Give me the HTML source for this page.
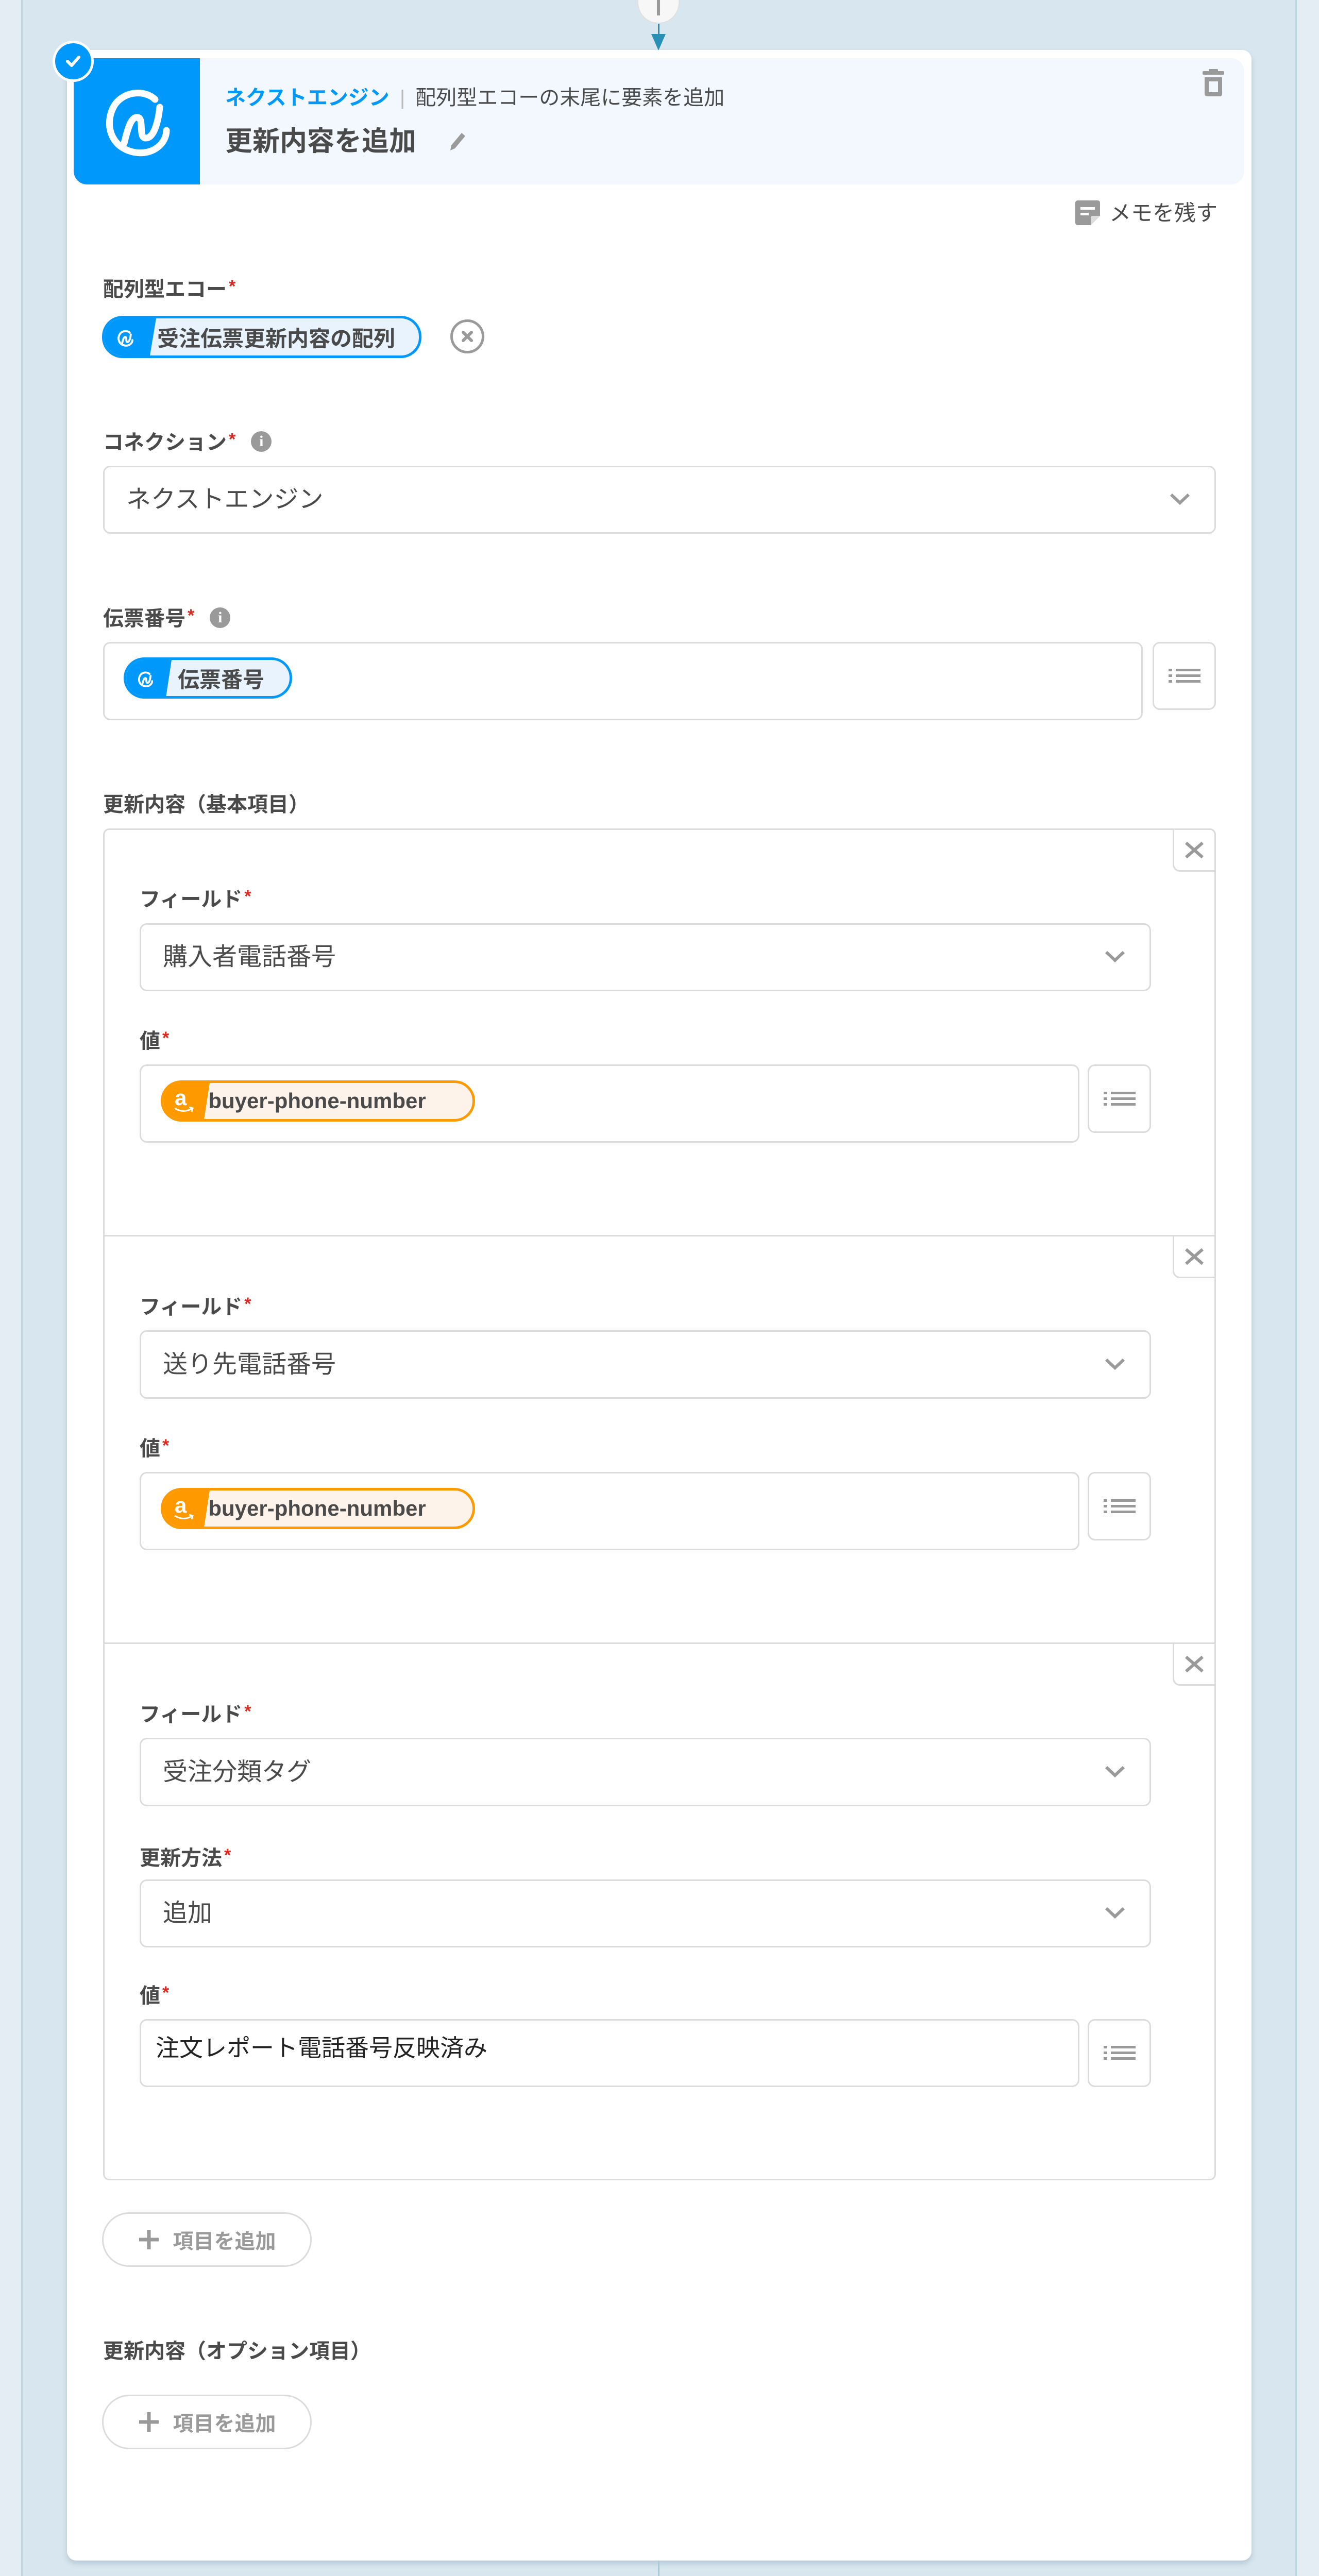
<!DOCTYPE html>
<html><head><meta charset="utf-8">
<style>
*{box-sizing:border-box;margin:0;padding:0}
html,body{width:2560px;height:5065px;overflow:hidden}
body{background:#d8e6ef;font-family:"Liberation Sans","Noto Sans CJK JP",sans-serif;color:#4a4a4a}
#w{position:relative;width:2560px;height:5065px;overflow:hidden;background:#d8e6ef}
.a{position:absolute}
.lbl{position:absolute;font-size:40px;font-weight:bold;line-height:56px;height:56px;color:#4a4a4a;white-space:nowrap}
.req{color:#e0281e;font-size:34px;position:relative;top:-8px;margin-left:4px}
.info{display:inline-block;width:40px;height:40px;border-radius:50%;background:#9a9a9a;color:#fff;font-size:30px;line-height:40px;text-align:center;vertical-align:middle;margin-left:30px;position:relative;top:-4px;font-family:"Liberation Serif",serif;font-weight:bold}
.box{position:absolute;border:3px solid #dcdcdc;border-radius:14px;background:#fff}
.sel{font-size:48px;line-height:1;color:#4a4a4a;padding-left:42px;display:flex;align-items:center}
.chev{position:absolute;right:46px;top:50%;margin-top:-14px}
.lb{display:flex;align-items:center;justify-content:center}
.pill{position:absolute;border-radius:40px;overflow:hidden;display:flex;align-items:center;font-weight:bold;font-size:42px;color:#4a4a4a}
.pill .ic{position:absolute;left:0;top:0;bottom:0}
.pill span{position:relative}
.btn{position:absolute;border:3px solid #dcdcdc;border-radius:54px;background:#fff;color:#9a9a9a;font-weight:bold;font-size:40px;display:flex;align-items:center;justify-content:center}
</style></head><body><div id="w">
<div class="a" style="left:0;top:0;width:44px;height:5065px;background:#e4edf4;border-right:3px solid #bcd6e2"></div>
<div class="a" style="left:2514px;top:0;width:46px;height:5065px;background:#e4edf4;border-left:3px solid #bcd6e2"></div>
<div class="a" style="left:1237px;top:0;width:82px;height:46px;border-radius:0 0 41px 41px;background:#f7f7f7;border:2px solid #e0e0e0;border-top:none"></div>
<div class="a" style="left:1275px;top:0px;width:6px;height:30px;background:#999"></div>
<div class="a" style="left:1277px;top:46px;width:3px;height:30px;background:#2a8fb5"></div>
<div class="a" style="left:1264px;top:66px;width:0;height:0;border-left:14px solid transparent;border-right:14px solid transparent;border-top:32px solid #2a8fb5"></div>
<div class="a" style="left:130px;top:97px;width:2299px;height:4873px;background:#fff;border-radius:18px;box-shadow:0 6px 10px rgba(80,110,130,.25)"></div>
<div class="a" style="left:143px;top:113px;width:2272px;height:245px;background:#f3f8fe;border-radius:0 26px 26px 26px"></div>
<div class="a" style="left:143px;top:113px;width:245px;height:245px;background:#0099fb;border-radius:0 0 0 26px"></div>
<svg class="a" style="left:183px;top:153px" width="165" height="165" viewBox="0 0 165 165">
<path d="M118 40 C100 22 60 22 40 50 C18 85 30 135 80 143 C115 148 140 125 140 100" fill="none" stroke="#fff" stroke-width="13" stroke-linecap="round"/>
<path d="M58 125 C65 95 72 72 85 75 C97 78 85 115 100 115 C118 115 125 75 127 55" fill="none" stroke="#fff" stroke-width="13" stroke-linecap="round"/>
</svg>
<div class="a" style="left:102px;top:79px;width:80px;height:80px;border-radius:50%;background:#0099fb;border:5px solid #fff"></div>
<svg class="a" style="left:122px;top:99px" width="40" height="40" viewBox="0 0 40 40"><path d="M9 20 L17 28 L31 12" fill="none" stroke="#fff" stroke-width="6" stroke-linecap="round" stroke-linejoin="round"/></svg>
<div class="a" style="left:437px;top:164px;font-size:40px;line-height:52px;white-space:nowrap"><span style="color:#0099fb;font-weight:bold">ネクストエンジン</span><span style="color:#bbb;margin:0 20px">|</span><span style="color:#4a4a4a">配列型エコーの末尾に要素を追加</span></div>
<div class="a" style="left:437px;top:244px;font-size:53px;line-height:62px;font-weight:bold;color:#4a4a4a;white-space:nowrap">更新内容を追加</div>
<svg class="a" style="left:868px;top:252px" width="40" height="45" viewBox="0 0 40 45"><path d="M6 40 L8 30 L28 6 L35 12 L15 36 Z" fill="#9a9a9a"/></svg>
<svg class="a" style="left:2334px;top:134px" width="42" height="54" viewBox="0 0 42 54"><rect x="0" y="4" width="42" height="7" rx="2" fill="#9a9a9a"/><rect x="12" y="0" width="18" height="6" rx="2" fill="#9a9a9a"/><path d="M4 16 H38 V48 Q38 53 33 53 H9 Q4 53 4 48 Z M12 24 V45 H30 V24 Z" fill="#9a9a9a" fill-rule="evenodd"/></svg>
<svg class="a" style="left:2087px;top:389px" width="48" height="48" viewBox="0 0 48 48"><path d="M5 0 H43 Q48 0 48 5 V30 L30 48 H5 Q0 48 0 43 V5 Q0 0 5 0 Z" fill="#9a9a9a"/><path d="M48 30 H34 Q30 30 30 34 V48 Z" fill="#ddd"/><rect x="10" y="13" width="28" height="5" fill="#fff"/><rect x="10" y="24" width="16" height="5" fill="#fff"/></svg>
<div class="a" style="left:2153px;top:388px;font-size:42px;line-height:52px;color:#4a4a4a;white-space:nowrap">メモを残す</div>

<div class="lbl" style="left:200px;top:534px">配列型エコー<span class="req">*</span></div>
<div class="pill" style="left:198px;top:613px;width:620px;height:82px;background:#e8f3fe;border:5px solid #0099fb">
 <div class="ic" style="width:100px;background:#0099fb;clip-path:polygon(0 0,100% 0,88% 100%,0 100%)"></div>
 <svg class="a" style="left:20px;top:18px" width="40" height="40" viewBox="0 0 165 165"><path d="M118 40 C100 22 60 22 40 50 C18 85 30 135 80 143 C115 148 140 125 140 100" fill="none" stroke="#fff" stroke-width="16" stroke-linecap="round"/><path d="M58 125 C65 95 72 72 85 75 C97 78 85 115 100 115 C118 115 125 75 127 55" fill="none" stroke="#fff" stroke-width="16" stroke-linecap="round"/></svg>
 <span style="left:102px">受注伝票更新内容の配列</span>
</div>
<div class="a" style="left:874px;top:620px;width:66px;height:66px;border-radius:50%;border:5px solid #9a9a9a"></div>
<svg class="a" style="left:891px;top:637px" width="32" height="32" viewBox="0 0 32 32"><path d="M8 8 L24 24 M24 8 L8 24" stroke="#9a9a9a" stroke-width="6" stroke-linecap="round"/></svg>

<div class="lbl" style="left:200px;top:831px">コネクション<span class="req">*</span><span class="info">i</span></div>
<div class="box sel" style="left:200px;top:904px;width:2160px;height:132px">ネクストエンジン<svg class="chev" width="42" height="26" viewBox="0 0 42 26"><path d="M4 4 L21 20 L38 4" fill="none" stroke="#9a9a9a" stroke-width="6"/></svg></div>

<div class="lbl" style="left:200px;top:1173px">伝票番号<span class="req">*</span><span class="info">i</span></div>
<div class="box" style="left:200px;top:1246px;width:2018px;height:152px"></div>
<div class="pill" style="left:240px;top:1276px;width:327px;height:80px;background:#e8f3fe;border:5px solid #0099fb">
 <div class="ic" style="width:88px;background:#0099fb;clip-path:polygon(0 0,100% 0,88% 100%,0 100%)"></div>
 <svg class="a" style="left:18px;top:18px" width="38" height="38" viewBox="0 0 165 165"><path d="M118 40 C100 22 60 22 40 50 C18 85 30 135 80 143 C115 148 140 125 140 100" fill="none" stroke="#fff" stroke-width="16" stroke-linecap="round"/><path d="M58 125 C65 95 72 72 85 75 C97 78 85 115 100 115 C118 115 125 75 127 55" fill="none" stroke="#fff" stroke-width="16" stroke-linecap="round"/></svg>
 <span style="left:100px">伝票番号</span>
</div>
<div class="box lb" style="left:2237px;top:1246px;width:123px;height:132px"><svg width="62" height="28" viewBox="0 0 62 28"><g fill="#9a9a9a"><rect x="0" y="0" width="7" height="5"/><rect x="14" y="0" width="48" height="5"/><rect x="0" y="11" width="7" height="5"/><rect x="14" y="11" width="48" height="5"/><rect x="0" y="22" width="7" height="5"/><rect x="14" y="22" width="48" height="5"/></g></svg></div>

<div class="lbl" style="left:200px;top:1534px">更新内容（基本項目）</div>
<div class="box" style="left:200px;top:1608px;width:2160px;height:2624px;border-radius:12px"></div>
<div class="a" style="left:203px;top:2397px;width:2154px;height:3px;background:#dcdcdc"></div>
<div class="a" style="left:203px;top:3188px;width:2154px;height:3px;background:#dcdcdc"></div>

<div class="a lb" style="left:2276px;top:1608px;width:84px;height:84px;border:3px solid #dcdcdc;border-radius:0 12px 0 14px;background:#fff"><svg width="40" height="32" viewBox="0 0 40 32"><path d="M4 2 L36 30 M36 2 L4 30" stroke="#9a9a9a" stroke-width="6"/></svg></div>
<div class="a lb" style="left:2276px;top:2397px;width:84px;height:84px;border:3px solid #dcdcdc;border-radius:0 0 0 14px;background:#fff"><svg width="40" height="32" viewBox="0 0 40 32"><path d="M4 2 L36 30 M36 2 L4 30" stroke="#9a9a9a" stroke-width="6"/></svg></div>
<div class="a lb" style="left:2276px;top:3188px;width:84px;height:84px;border:3px solid #dcdcdc;border-radius:0 0 0 14px;background:#fff"><svg width="40" height="32" viewBox="0 0 40 32"><path d="M4 2 L36 30 M36 2 L4 30" stroke="#9a9a9a" stroke-width="6"/></svg></div>

<div class="lbl" style="left:271px;top:1718px">フィールド<span class="req">*</span></div>
<div class="box sel" style="left:271px;top:1792px;width:1963px;height:132px">購入者電話番号<svg class="chev" width="42" height="26" viewBox="0 0 42 26"><path d="M4 4 L21 20 L38 4" fill="none" stroke="#9a9a9a" stroke-width="6"/></svg></div>
<div class="lbl" style="left:271px;top:1993px">値<span class="req">*</span></div>
<div class="box" style="left:271px;top:2066px;width:1824px;height:152px"></div>
<div class="pill" style="left:312px;top:2097px;width:610px;height:80px;background:#fdf3ea;border:5px solid #ff9900">
 <div class="ic" style="width:90px;background:#ff9900;clip-path:polygon(0 0,100% 0,88% 100%,0 100%)"></div>
 <span style="left:22px;top:-6px;color:#fff;font-size:42px">a</span>
 <svg class="a" style="left:20px;top:46px" width="40" height="14" viewBox="0 0 40 14"><path d="M2 3 Q20 14 36 3 M30 1 L37 3 L35 10" fill="none" stroke="#fff" stroke-width="3"/></svg>
 <span style="left:64px">buyer-phone-number</span>
</div>
<div class="box lb" style="left:2111px;top:2066px;width:123px;height:133px"><svg width="62" height="28" viewBox="0 0 62 28"><g fill="#9a9a9a"><rect x="0" y="0" width="7" height="5"/><rect x="14" y="0" width="48" height="5"/><rect x="0" y="11" width="7" height="5"/><rect x="14" y="11" width="48" height="5"/><rect x="0" y="22" width="7" height="5"/><rect x="14" y="22" width="48" height="5"/></g></svg></div>

<div class="lbl" style="left:271px;top:2509px">フィールド<span class="req">*</span></div>
<div class="box sel" style="left:271px;top:2582px;width:1963px;height:133px">送り先電話番号<svg class="chev" width="42" height="26" viewBox="0 0 42 26"><path d="M4 4 L21 20 L38 4" fill="none" stroke="#9a9a9a" stroke-width="6"/></svg></div>
<div class="lbl" style="left:271px;top:2784px">値<span class="req">*</span></div>
<div class="box" style="left:271px;top:2857px;width:1824px;height:152px"></div>
<div class="pill" style="left:312px;top:2888px;width:610px;height:80px;background:#fdf3ea;border:5px solid #ff9900">
 <div class="ic" style="width:90px;background:#ff9900;clip-path:polygon(0 0,100% 0,88% 100%,0 100%)"></div>
 <span style="left:22px;top:-6px;color:#fff;font-size:42px">a</span>
 <svg class="a" style="left:20px;top:46px" width="40" height="14" viewBox="0 0 40 14"><path d="M2 3 Q20 14 36 3 M30 1 L37 3 L35 10" fill="none" stroke="#fff" stroke-width="3"/></svg>
 <span style="left:64px">buyer-phone-number</span>
</div>
<div class="box lb" style="left:2111px;top:2857px;width:123px;height:133px"><svg width="62" height="28" viewBox="0 0 62 28"><g fill="#9a9a9a"><rect x="0" y="0" width="7" height="5"/><rect x="14" y="0" width="48" height="5"/><rect x="0" y="11" width="7" height="5"/><rect x="14" y="11" width="48" height="5"/><rect x="0" y="22" width="7" height="5"/><rect x="14" y="22" width="48" height="5"/></g></svg></div>

<div class="lbl" style="left:271px;top:3300px">フィールド<span class="req">*</span></div>
<div class="box sel" style="left:271px;top:3373px;width:1963px;height:133px">受注分類タグ<svg class="chev" width="42" height="26" viewBox="0 0 42 26"><path d="M4 4 L21 20 L38 4" fill="none" stroke="#9a9a9a" stroke-width="6"/></svg></div>
<div class="lbl" style="left:271px;top:3579px">更新方法<span class="req">*</span></div>
<div class="box sel" style="left:271px;top:3648px;width:1963px;height:132px">追加<svg class="chev" width="42" height="26" viewBox="0 0 42 26"><path d="M4 4 L21 20 L38 4" fill="none" stroke="#9a9a9a" stroke-width="6"/></svg></div>
<div class="lbl" style="left:271px;top:3846px">値<span class="req">*</span></div>
<div class="box" style="left:271px;top:3919px;width:1824px;height:132px;font-size:46px;color:#222;padding:28px 0 0 28px;line-height:1.1">注文レポート電話番号反映済み</div>
<div class="box lb" style="left:2111px;top:3919px;width:123px;height:132px"><svg width="62" height="28" viewBox="0 0 62 28"><g fill="#9a9a9a"><rect x="0" y="0" width="7" height="5"/><rect x="14" y="0" width="48" height="5"/><rect x="0" y="11" width="7" height="5"/><rect x="14" y="11" width="48" height="5"/><rect x="0" y="22" width="7" height="5"/><rect x="14" y="22" width="48" height="5"/></g></svg></div>

<div class="btn" style="left:198px;top:4294px;width:407px;height:106px"><svg width="42" height="42" viewBox="0 0 42 42" style="margin-right:26px"><path d="M21 2 V40 M2 21 H40" stroke="#9a9a9a" stroke-width="7"/></svg>項目を追加</div>
<div class="lbl" style="left:200px;top:4536px">更新内容（オプション項目）</div>
<div class="btn" style="left:198px;top:4648px;width:407px;height:106px"><svg width="42" height="42" viewBox="0 0 42 42" style="margin-right:26px"><path d="M21 2 V40 M2 21 H40" stroke="#9a9a9a" stroke-width="7"/></svg>項目を追加</div>

<div class="a" style="left:1277px;top:4970px;width:3px;height:53px;background:#a9c9da"></div>
<div class="a" style="left:1237px;top:5023px;width:82px;height:42px;border-radius:41px 41px 0 0;background:#f7f7f7;border:2px solid #e0e0e0;border-bottom:none"></div>
<div class="a" style="left:1277px;top:5045px;width:4px;height:20px;background:#999"></div>
<div class="a" style="left:1265px;top:5058px;width:28px;height:7px;background:#999"></div>
</div></body></html>
